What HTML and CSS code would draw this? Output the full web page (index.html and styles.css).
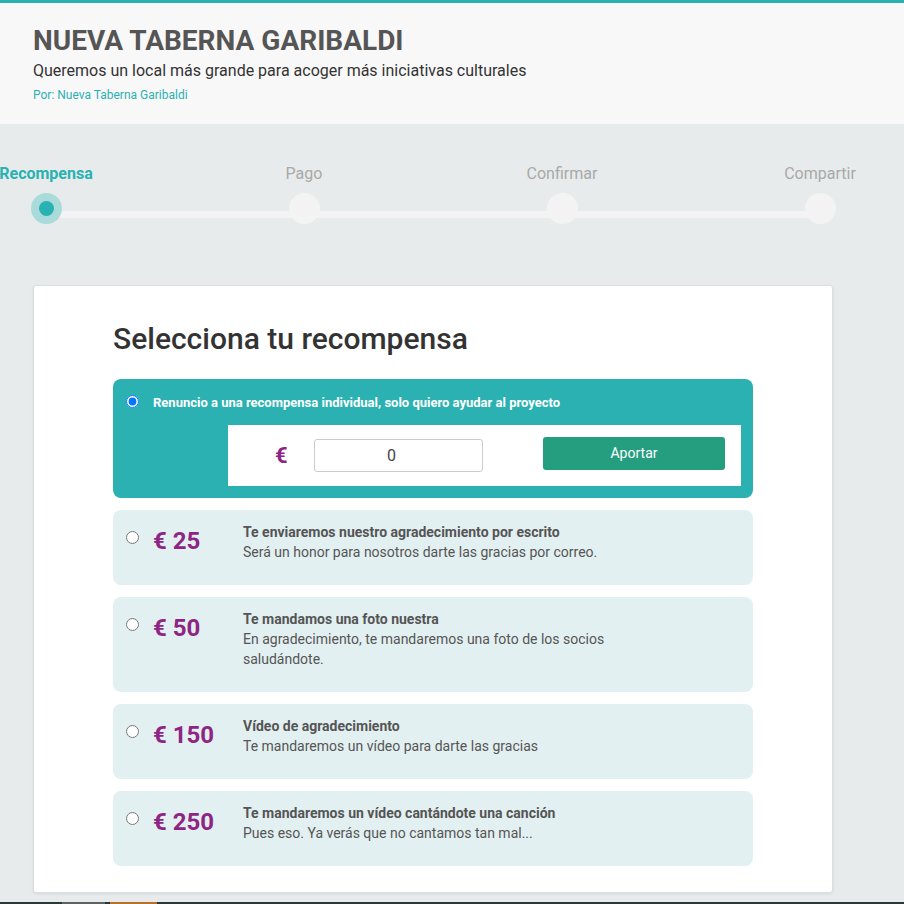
FILE: index.html
```html
<!DOCTYPE html>
<html lang="es">
<head>
  <meta charset="UTF-8">
  <title>Nueva Taberna Garibaldi</title>
  <link rel="stylesheet" href="styles.css">
</head>
<body>

<header class="project-head">
  <h1>NUEVA TABERNA GARIBALDI</h1>
  <p class="tagline">Queremos un local más grande para acoger más iniciativas culturales</p>
  <p class="author">Por: Nueva Taberna Garibaldi</p>
</header>

<div class="steps">
  <div class="steps-line"></div>
  <div class="step active"><span class="step-label">Recompensa</span><span class="dot"></span></div>
  <div class="step"><span class="step-label">Pago</span><span class="dot"></span></div>
  <div class="step"><span class="step-label">Confirmar</span><span class="dot"></span></div>
  <div class="step"><span class="step-label">Compartir</span><span class="dot"></span></div>
</div>

<div class="card">
  <h2>Selecciona tu recompensa</h2>

  <label class="reward free">
    <input type="radio" name="reward" checked>
    <div class="free-body">
      <strong>Renuncio a una recompensa individual, solo quiero ayudar al proyecto</strong>
      <div class="amount-box">
        <span class="euro">€</span>
        <input class="amount" type="text" value="0">
        <button type="button">Aportar</button>
      </div>
    </div>
  </label>

  <label class="reward">
    <input type="radio" name="reward">
    <span class="price">€ 25</span>
    <div class="desc">
      <strong>Te enviaremos nuestro agradecimiento por escrito</strong>
      <p>Será un honor para nosotros darte las gracias por correo.</p>
    </div>
  </label>

  <label class="reward">
    <input type="radio" name="reward">
    <span class="price">€ 50</span>
    <div class="desc">
      <strong>Te mandamos una foto nuestra</strong>
      <p>En agradecimiento, te mandaremos una foto de los socios saludándote.</p>
    </div>
  </label>

  <label class="reward">
    <input type="radio" name="reward">
    <span class="price">€ 150</span>
    <div class="desc">
      <strong>Vídeo de agradecimiento</strong>
      <p>Te mandaremos un vídeo para darte las gracias</p>
    </div>
  </label>

  <label class="reward">
    <input type="radio" name="reward">
    <span class="price">€ 250</span>
    <div class="desc">
      <strong>Te mandaremos un vídeo cantándote una canción</strong>
      <p>Pues eso. Ya verás que no cantamos tan mal...</p>
    </div>
  </label>
</div>

<footer class="taskbar">
  <span class="task grey"></span>
  <span class="task orange"></span>
</footer>

</body>
</html>
```

FILE: styles.css
```css
body {
  font-family: Roboto, "Liberation Sans", sans-serif;
  background: #e7ebeb;
  margin: 0;
  padding: 0;
  color: #444;
}

.project-head {
  background: #f9f8f9;
  border-top: 3px solid #2ab1b1;
  padding: 22px 33px 22px;
}

.project-head h1 {
  margin: 0;
  font-size: 28px;
  line-height: 32px;
  font-weight: 700;
  color: #555;
}

.tagline {
  margin: 4px 0 0;
  font-size: 16px;
  line-height: 20px;
  color: #333;
}

.author {
  margin: 7px 0 0;
  font-size: 12px;
  line-height: 14px;
  color: #2ab1b1;
}

.steps {
  position: relative;
  display: grid;
  grid-template-columns: repeat(4, 258px);
  margin: 38px 0 0 -83px;
  width: 1032px;
}

.steps-line {
  position: absolute;
  left: 129px;
  width: 774px;
  top: 49px;
  height: 7px;
  background: #f3f3f3;
}

.step {
  position: relative;
  display: flex;
  flex-direction: column;
  align-items: center;
}

.step-label {
  font-size: 16px;
  line-height: 24px;
  color: #a9a9a9;
}

.step.active .step-label {
  color: #2ab1b1;
  font-weight: 700;
}

.dot {
  width: 31px;
  height: 31px;
  margin-top: 7px;
  border-radius: 50%;
  background: #f3f3f3;
}

.step.active .dot {
  background: #a9dbdb;
  display: flex;
  align-items: center;
  justify-content: center;
}

.step.active .dot::after {
  content: "";
  width: 15px;
  height: 15px;
  border-radius: 50%;
  background: #2ab1b1;
}

.card {
  background: white;
  margin: 61px 71px 0 33px;
  padding: 32px 79px 26px;
  border: 1px solid #dcdfdf;
  border-radius: 3px;
  box-shadow: 0 1px 3px rgba(0,0,0,0.08);
}

.card h2 {
  margin: 0 0 19px;
  font-size: 30px;
  line-height: 42px;
  font-weight: 500;
  color: #333;
}

.reward {
  display: flex;
  align-items: flex-start;
  background: #e3f0f1;
  border-radius: 8px;
  padding: 12px 16px 23px 13px;
  margin-bottom: 12px;
  cursor: pointer;
}

.reward:last-child {
  margin-bottom: 0;
}

.reward input[type=radio] {
  margin: 9px 0 0;
  width: 13px;
  height: 13px;
}

.price {
  width: 90px;
  margin-left: 14px;
  font-size: 24px;
  line-height: 32px;
  font-weight: 700;
  color: #8e2584;
  position: relative;
  top: 3px;
}

.desc strong {
  display: block;
  font-size: 14px;
  line-height: 20px;
  color: #555;
}

.desc p {
  margin: 0;
  font-size: 14px;
  line-height: 20px;
  color: #555;
  max-width: 380px;
}

.reward.free {
  background: #2bb1b1;
  padding: 15px 12px 12px 13px;
}

.reward.free input[type=radio] {
  margin-top: 1px;
}

.free-body {
  flex: 1;
  margin-left: 14px;
}

.free-body strong {
  display: block;
  font-size: 13px;
  line-height: 18px;
  color: white;
}

.amount-box {
  display: flex;
  align-items: center;
  background: white;
  margin: 13px 0 0 75px;
  height: 61px;
  padding: 0 16px 0 47px;
}

.euro {
  font-size: 22px;
  font-weight: 700;
  color: #8e2584;
  width: 39px;
}

.amount {
  width: 169px;
  height: 33px;
  box-sizing: border-box;
  border: 1px solid #ccc;
  border-radius: 3px;
  text-align: center;
  padding-right: 16px;
  font-family: Roboto, sans-serif;
  font-size: 16px;
  color: #444;
}

button {
  margin-left: auto;
  margin-top: -5px;
  width: 182px;
  height: 33px;
  background: #259e80;
  color: white;
  border: none;
  border-radius: 3px;
  font-family: Roboto, sans-serif;
  font-size: 14px;
  cursor: pointer;
}

button:hover {
  background: #1f8a70;
}

.taskbar {
  margin-top: 9px;
  height: 30px;
  background: #2b3838;
  display: flex;
  padding-left: 62px;
  gap: 5px;
}

.task {
  width: 43px;
  height: 100%;
}

.task.grey {
  background: #5d6363;
}

.task.orange {
  width: 47px;
  background: #b8702c;
}
```
